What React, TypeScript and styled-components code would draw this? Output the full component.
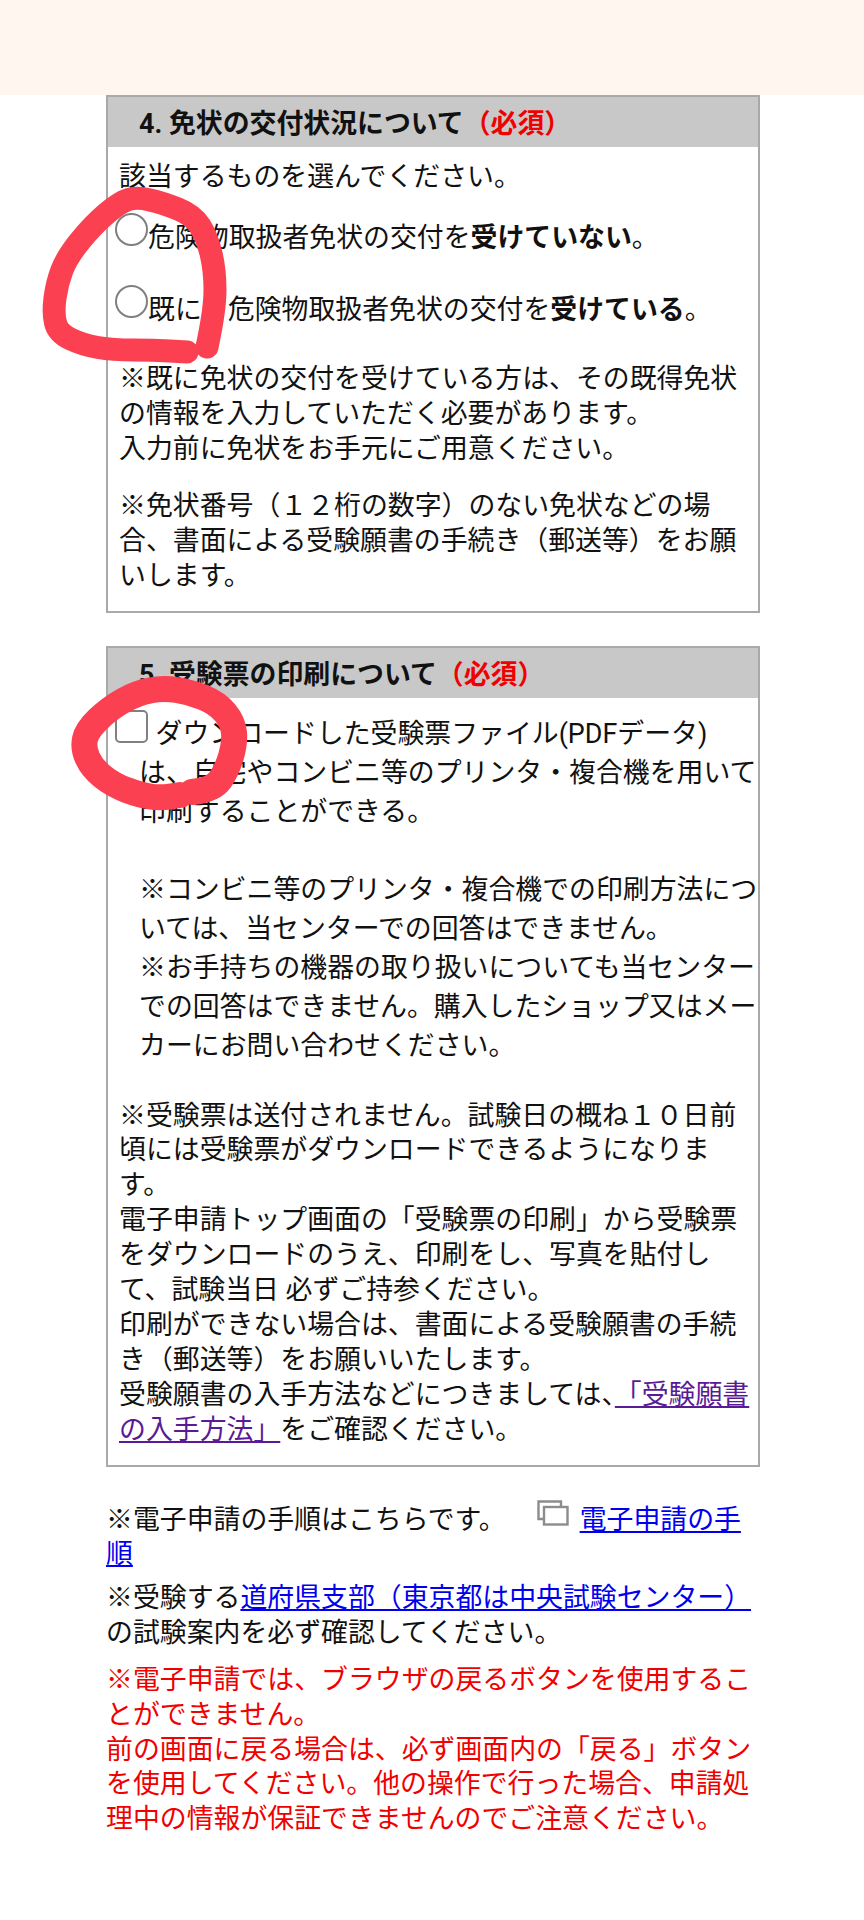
import styled, { createGlobalStyle } from 'styled-components'

const GlobalStyle = createGlobalStyle`
html, body {
  margin: 0;
  padding: 0;
  background: #fff;
}
body {
  font-family: Roboto, "Noto Sans CJK JP", "Noto Sans", sans-serif;
  font-size: 26.88px;
  line-height: 34.9px;
  color: #111;
  text-spacing-trim: space-all;
}
`
const Page = styled.div`
position: relative;
width: 864px;
height: 1920px;
overflow: hidden;
`
const TopBand = styled.div`
height: 95px;
background: #fff6ef;
`
const Main = styled.main`
width: 654px;
margin-left: 106px;
`
const Card = styled.section<{ $gap?: number }>`
box-sizing: border-box;
border: 2px solid #a9a9a9;
margin-bottom: ${(p) => p.$gap ?? 0}px;
`
const CardTitle = styled.h2`
box-sizing: border-box;
height: 50px;
margin: 0;
padding-left: 31px;
background: #c8c8c8;
font-size: 26.88px;
font-weight: 700;
line-height: 55px;
`
const Required = styled.span`
color: #f00000;
`
const CardBody = styled.div<{ $top: number; $bottom: number }>`
padding: ${(p) => p.$top}px 0 ${(p) => p.$bottom}px 11px;
`
const Paragraph = styled.p<{ $top?: number }>`
margin: ${(p) => p.$top ?? 0}px 0 0;
`
const Options = styled.div`
display: flex;
flex-direction: column;
gap: 37.5px;
margin: 26px 0 33.5px;
`
const Option = styled.label`
display: flex;
align-items: flex-start;
margin-left: -4px;
`
const Radio = styled.input.attrs({ type: 'radio' })`
appearance: none;
box-sizing: border-box;
flex: none;
width: 33px;
height: 33px;
margin: -8px 0 0 0;
border: 2px solid #808080;
border-radius: 50%;
background: #fff;
`
const Agreement = styled.div`
padding-left: 20px;
line-height: 39.1px;
`
const Checkbox = styled.input.attrs({ type: 'checkbox' })`
appearance: none;
box-sizing: border-box;
width: 33px;
height: 33px;
margin: 0 7.5px 0 -24px;
border: 2px solid #808080;
border-radius: 5px;
background: #fff;
vertical-align: baseline;
`
const HalfComma = styled.span`
font-feature-settings: "halt";
`
const TextLink = styled.a<{ $visited?: boolean }>`
color: ${(p) => (p.$visited ? '#5a1a96' : '#0000ee')};
text-decoration: underline;
`
const Footer = styled.div`
margin-top: 32.5px;
`
const Note = styled.p<{ $red?: boolean; $top?: number }>`
margin: ${(p) => p.$top ?? 0}px 0 0;
color: ${(p) => (p.$red ? '#f00000' : 'inherit')};
`
const WindowIcon = styled.svg`
width: 32px;
height: 26px;
margin: 0 11px 0 31px;
vertical-align: 3px;
`
const Scribble = styled.svg`
position: absolute;
top: 0;
left: 0;
width: 864px;
height: 1920px;
pointer-events: none;
`

// hand-drawn marker strokes, traced through their centre line
const smooth = (pts: number[][]) => {
  let d = `M${pts[0][0]} ${pts[0][1]}`
  for (let i = 1; i < pts.length - 1; i++) {
    const mx = (pts[i][0] + pts[i + 1][0]) / 2
    const my = (pts[i][1] + pts[i + 1][1]) / 2
    d += `Q${pts[i][0]} ${pts[i][1]} ${mx} ${my}`
  }
  const last = pts[pts.length - 1]
  return `${d}L${last[0]} ${last[1]}`
}

const radioLoop = [
  [207, 347], [215, 310], [215, 270], [207, 237], [193, 215], [163, 203], [137, 197], [120, 202],
  [93, 225], [67, 257], [57, 283], [53, 313], [58, 333], [83, 345], [113, 350], [153, 350], [187, 352],
]
const checkboxLoop = [
  [192, 792], [213, 790], [227, 770], [235, 743], [233, 722], [217, 703], [190, 692], [163, 688],
  [137, 693], [110, 708], [87, 730], [83, 748], [92, 768], [113, 785], [140, 795], [160, 798], [180, 795],
]

export default function App() {
  return (
    <Page lang="ja">
      <GlobalStyle />
      <TopBand />
      <Main>
        <Card $gap={32.5}>
          <CardTitle>4. 免状の交付状況について<Required>（必須）</Required></CardTitle>
          <CardBody $top={13} $bottom={17}>
            <Paragraph>該当するものを選んでください。</Paragraph>
            <Options>
              <Option>
                <Radio name="license" />
                <span>危険物取扱者免状の交付を<b>受けていない</b>。</span>
              </Option>
              <Option>
                <Radio name="license" />
                <span>既に、危険物取扱者免状の交付を<b>受けている</b>。</span>
              </Option>
            </Options>
            <Paragraph>
              ※既に免状の交付を受けている方は、その既得免状の情報を入力していただく必要があります。<br />
              入力前に免状をお手元にご用意ください。
            </Paragraph>
            <Paragraph $top={23}>
              ※免状番号（１２桁の数字）のない免状などの場合、書面による受験願書の手続き（郵送等）をお願いします。
            </Paragraph>
          </CardBody>
        </Card>
        <Card>
          <CardTitle>5. 受験票の印刷について<Required>（必須）</Required></CardTitle>
          <CardBody $top={12} $bottom={17.5}>
            <Agreement>
              <Checkbox />
              ダウンロードした受験票ファイル(PDFデータ)は、自宅やコンビニ等のプリンタ・複合機を用いて印刷することができる。<br />
              <br />
              ※コンビニ等のプリンタ・複合機での印刷方法については、当センターでの回答はできません。<br />
              ※お手持ちの機器の取り扱いについても当センターでの回答はできません。購入したショップ又はメーカーにお問い合わせください。
            </Agreement>
            <Paragraph $top={32}>
              ※受験票は送付されません。試験日の概ね１０日前頃には受験票がダウンロードできるようになります。<br />
              電子申請トップ画面の「受験票の印刷」から受験票をダウンロードのうえ、印刷をし、写真を貼付して、試験当日 必ずご持参ください。<br />
              印刷ができない場合は、書面による受験願書の手続き（郵送等）をお願いいたします。<br />
              受験願書の入手方法などにつきましては<HalfComma>、</HalfComma><TextLink $visited href="#">「受験願書の入手方法」</TextLink>をご確認ください。
            </Paragraph>
          </CardBody>
        </Card>
        <Footer>
          <Note>
            ※電子申請の手順はこちらです。
            <WindowIcon viewBox="0 0 32 26" fill="none" stroke="#8c8c8c" strokeWidth="2.4">
              <path d="M6 19H1.5V1.5H24V7" />
              <rect x="7" y="7" width="23.5" height="17.5" />
            </WindowIcon>
            <TextLink href="#">電子申請の手順</TextLink>
          </Note>
          <Note $top={9}>
            ※受験する<TextLink href="#">道府県支部（東京都は中央試験センター） </TextLink>の試験案内を必ず確認してください。
          </Note>
          <Note $red $top={11.5}>
            ※電子申請では、ブラウザの戻るボタンを使用することができません。<br />
            前の画面に戻る場合は、必ず画面内の「戻る」ボタンを使用してください。他の操作で行った場合、申請処理中の情報が保証できませんのでご注意ください。
          </Note>
        </Footer>
      </Main>
      <Scribble viewBox="0 0 864 1920" fill="none" stroke="#fb4052" strokeLinecap="round" strokeLinejoin="round">
        <path d={smooth(radioLoop)} strokeWidth="23" />
        <path d={smooth(checkboxLoop)} strokeWidth="26" />
      </Scribble>
    </Page>
  )
}
